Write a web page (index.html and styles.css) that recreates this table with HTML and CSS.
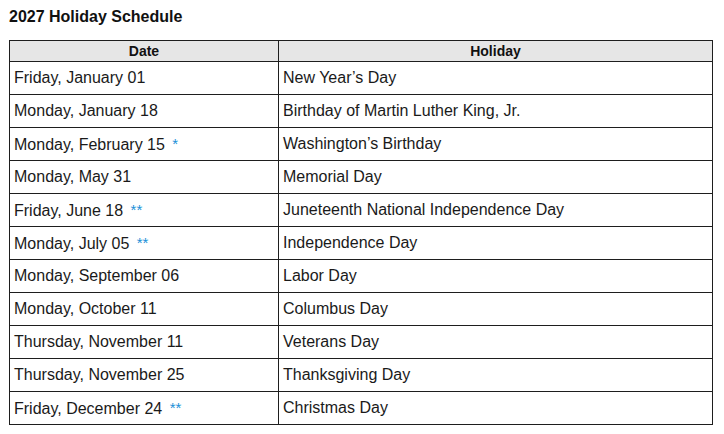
FILE: index.html
```html
<!DOCTYPE html>
<html>
<head>
<meta charset="utf-8">
<link rel="stylesheet" href="styles.css">
</head>
<body>
<h1 class="title">2027 Holiday Schedule</h1>
<table class="sched">
<thead>
<tr><th class="c-date">Date</th><th>Holiday</th></tr>
</thead>
<tbody>
<tr><td>Friday, January 01</td><td>New Year’s Day</td></tr>
<tr><td>Monday, January 18</td><td>Birthday of Martin Luther King, Jr.</td></tr>
<tr><td>Monday, February 15 <span class="ast">*</span></td><td>Washington’s Birthday</td></tr>
<tr><td>Monday, May 31</td><td>Memorial Day</td></tr>
<tr><td>Friday, June 18 <span class="ast">**</span></td><td>Juneteenth National Independence Day</td></tr>
<tr><td>Monday, July 05 <span class="ast">**</span></td><td>Independence Day</td></tr>
<tr><td>Monday, September 06</td><td>Labor Day</td></tr>
<tr><td>Monday, October 11</td><td>Columbus Day</td></tr>
<tr><td>Thursday, November 11</td><td>Veterans Day</td></tr>
<tr><td>Thursday, November 25</td><td>Thanksgiving Day</td></tr>
<tr><td>Friday, December 24 <span class="ast">**</span></td><td>Christmas Day</td></tr>
</tbody>
</table>
</body>
</html>
```
FILE: styles.css
```css
html, body {
  margin: 0;
  padding: 0;
  background: #fff;
}
body {
  padding: 7px 9px;
  font-family: "Liberation Sans", Arial, sans-serif;
  color: #1a1a1a;
}
.title {
  margin: 0;
  font-size: 16px;
  font-weight: bold;
  line-height: 19px;
  color: #111;
}
.sched {
  margin-top: 14px;
  border-collapse: collapse;
  width: 704px;
  table-layout: fixed;
}
.sched th, .sched td {
  border: 1px solid #1e1e1e;
  padding: 0 4px;
}
.sched th {
  background: #e6e6e6;
  font-size: 14px;
  font-weight: bold;
  height: 20px;
  line-height: 16px;
  text-align: center;
  color: #111;
}
.sched .c-date {
  width: 260px;
}
.sched td {
  font-size: 16px;
  height: 32px;
  line-height: 18px;
  color: #1a1a1a;
}
.ast {
  color: #2090d8;
  font-size: 15px;
  margin-left: 3px;
  vertical-align: 1px;
}
```
